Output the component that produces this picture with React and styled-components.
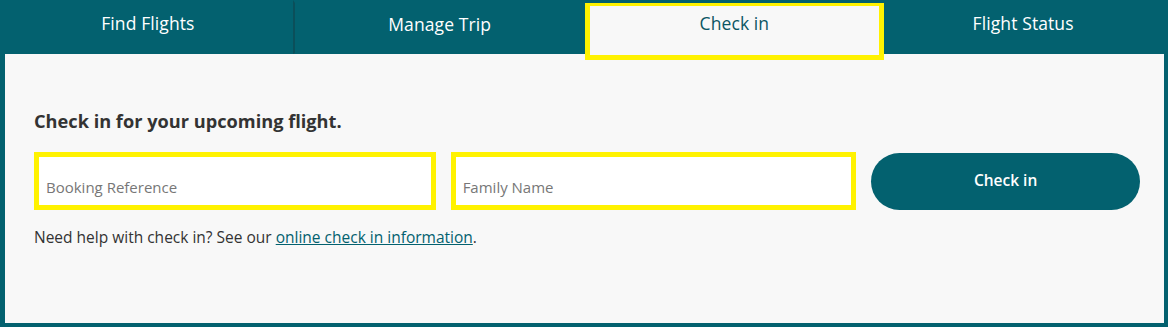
import React from 'react';
import styled, { createGlobalStyle } from 'styled-components';

const GlobalStyle = createGlobalStyle`
    html, body {
        margin: 0;
        padding: 0;
        background: #03616f;
        font-family: "Open Sans", "Noto Sans", sans-serif;
    }
    * {
        box-sizing: border-box;
    }
`

const Frame = styled.div`
    width: 1168px;
    height: 327px;
    background-color: #03616f;
    padding: 0 4px 4px 5px;
    display: flex;
    flex-direction: column;
`

const TabBar = styled.div`
    height: 54px;
    display: flex;
    align-items: stretch;
    margin: 0 -4px 0 -5px;
    padding-left: 3px;
    position: relative;
    z-index: 1;
`

const Tab = styled.button`
    flex: 1;
    border: none;
    background: transparent;
    color: #ffffff;
    font-family: inherit;
    font-size: 17.5px;
    letter-spacing: 0.1px;
    padding: 0 0 8px;
    cursor: pointer;
    position: relative;
    border-left: ${p => (p.$divider ? '2px solid #0b4f5a' : 'none')};
    border-top: ${p => (p.$divider ? '3px solid #03616f' : 'none')};
    border-bottom: ${p => (p.$divider ? '1px solid #03616f' : 'none')};
    background-clip: padding-box;

    ${p => p.$active && `
        background: #f8f8f8;
        color: #0b5563;
        margin: 3px -6px -6px 0;
        border: 5px solid #fff200;
        border-top-width: 3px;
        padding: 0 0 15px;
    `}
`

const Panel = styled.div`
    flex: 1;
    background-color: #f8f8f8;
    padding: 55px 24px 0 29px;
`

const Heading = styled.h2`
    margin: 0 0 19px;
    font-size: 18.2px;
    font-weight: 700;
    color: #333333;
`

const FormRow = styled.div`
    display: flex;
    align-items: center;
    gap: 15px;
`

const Field = styled.input`
    width: ${p => p.$width}px;
    height: 58px;
    border: 5px solid #fff200;
    background: #ffffff;
    padding: 12px 7px 0;
    font-family: inherit;
    font-size: 15px;
    color: #333333;
    outline: none;

    &::placeholder {
        color: #777777;
    }
`

const SubmitButton = styled.button`
    width: 269px;
    height: 57px;
    border: none;
    border-radius: 29px;
    background-color: #03616f;
    color: #ffffff;
    font-family: inherit;
    font-size: 15.5px;
    font-weight: 600;
    padding: 0 0 3px;
    cursor: pointer;
`

const Help = styled.p`
    margin: 16px 0 0;
    font-size: 15.5px;
    color: #333333;

    a {
        color: #03616f;
        text-decoration: underline;
    }
`

const tabs = ['Find Flights', 'Manage Trip', 'Check in', 'Flight Status'];

export default function App() {
    return (
        <>
            <GlobalStyle />
            <Frame>
                <TabBar>
                    {tabs.map((t, i) => (
                        <Tab key={t} $active={i === 2} $divider={i === 1}>
                            {t}
                        </Tab>
                    ))}
                </TabBar>
                <Panel>
                    <Heading>Check in for your upcoming flight.</Heading>
                    <FormRow>
                        <Field $width={402} placeholder="Booking Reference" />
                        <Field $width={406} placeholder="Family Name" />
                        <SubmitButton>Check in</SubmitButton>
                    </FormRow>
                    <Help>
                        Need help with check in? See our <a href="#">online check in information</a>.
                    </Help>
                </Panel>
            </Frame>
        </>
    );
}
